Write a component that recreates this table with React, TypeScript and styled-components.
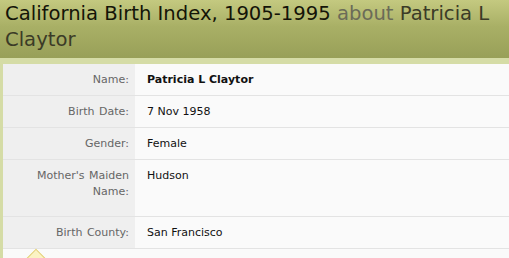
import React from 'react';
import styled, { createGlobalStyle } from 'styled-components';

interface IRecord {
    label: string;
    value: string;
    strong?: boolean;
    tall?: boolean;
}

const records: IRecord[] = [
    { label: 'Name:', value: 'Patricia L Claytor', strong: true },
    { label: 'Birth Date:', value: '7 Nov 1958' },
    { label: 'Gender:', value: 'Female' },
    { label: "Mother's Maiden Name:", value: 'Hudson', tall: true },
    { label: 'Birth County:', value: 'San Francisco' },
];

const App = (): JSX.Element => {
    return (
        <SPage>
            <GlobalStyle />
            <SHeader>
                <STitle>
                    California Birth Index, 1905-1995 <SAbout>about</SAbout> <SWho>Patricia L Claytor</SWho>
                </STitle>
            </SHeader>
            <SFrame>
                <STable>
                    {records.map((record: IRecord) => (
                        <SRow key={record.label}>
                            <SLabel tall={record.tall}>{record.label}</SLabel>
                            <SValue strong={record.strong}>{record.value}</SValue>
                        </SRow>
                    ))}
                </STable>
                <SPointer />
            </SFrame>
        </SPage>
    );
};

const LABEL_WIDTH = 132;

const GlobalStyle = createGlobalStyle`
    html, body {
        margin: 0;
        padding: 0;
        background: #fafafa;
        overflow: hidden;
    }
`;

const SPage = styled.div`
    width: 509px;
    height: 258px;
    overflow: hidden;
    font-family: Verdana, "DejaVu Sans", sans-serif;
`;

const SHeader = styled.div`
    height: 58px;
    box-sizing: border-box;
    padding: 1px 0 0 5px;
    background: linear-gradient(to bottom, #c4c980 0%, #a9b066 45%, #98a058 100%);
`;

const STitle = styled.h1`
    margin: 0;
    font-family: Tahoma, "DejaVu Sans", sans-serif;
    font-weight: normal;
    font-size: 19.6px;
    line-height: 26px;
    color: #141408;
`;

const SAbout = styled.span`
    color: #6b6b58;
`;

const SWho = styled.span`
    color: #3b3b27;
`;

const SFrame = styled.div`
    position: relative;
    padding: 6px 0 0 3px;
    background: #d5dca6;
    height: 200px;
`;

const STable = styled.div`
    display: flex;
    flex-direction: column;
    background: #fafafa;
    height: 100%;
`;

const SRow = styled.div`
    display: flex;
    border-bottom: 1px solid #e3e3e3;
    font-size: 11px;
    line-height: 16px;
`;

const SLabel = styled.div<{ tall?: boolean }>`
    width: ${LABEL_WIDTH}px;
    box-sizing: border-box;
    flex: none;
    background: #efefef;
    color: #666666;
    text-align: right;
    padding: 8px 6px ${(p) => (p.tall ? 16 : 7)}px 30px;
    word-spacing: 1px;
`;

const SValue = styled.div<{ strong?: boolean }>`
    flex: 1;
    padding: 8px 0 7px 12px;
    color: #111111;
    font-weight: ${(p) => (p.strong ? 'bold' : 'normal')};
`;

const SPointer = styled.div`
    position: absolute;
    left: 28px;
    top: 194px;
    width: 14px;
    height: 14px;
    background: #fbf3c4;
    border: 1px solid #e3cf7a;
    transform: rotate(45deg);
`;

export default App;
